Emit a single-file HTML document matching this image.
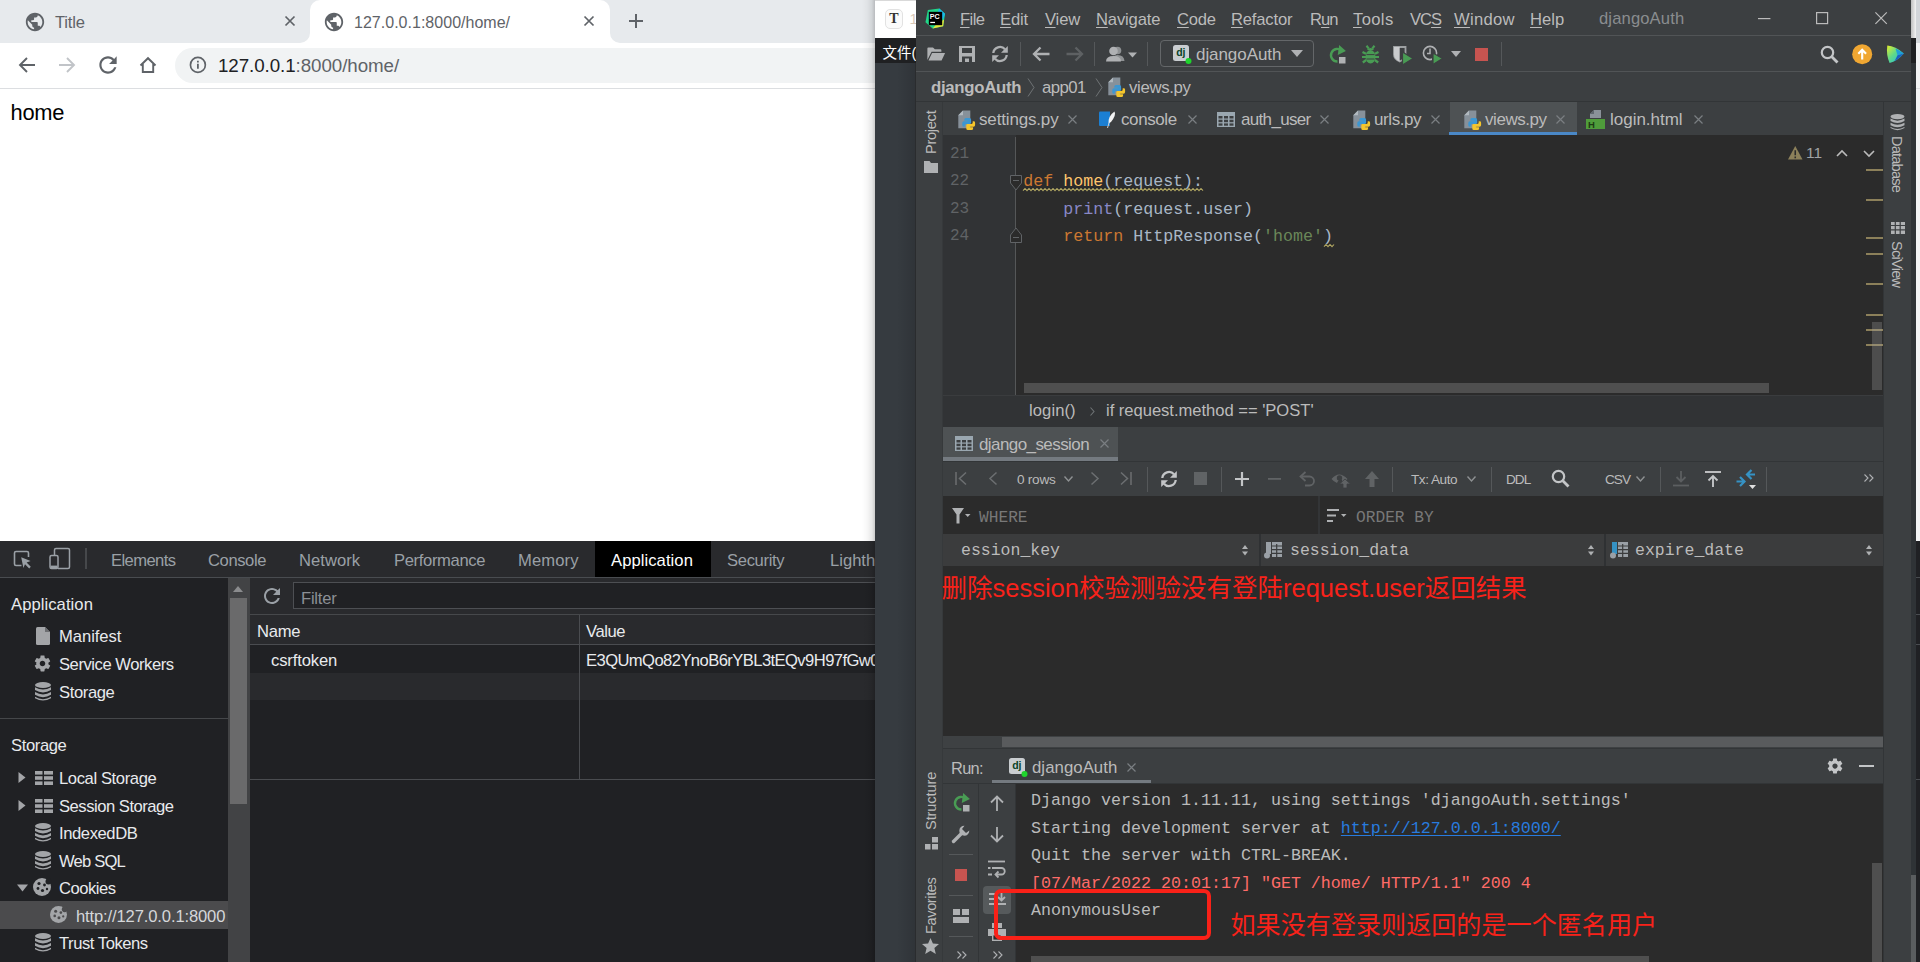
<!DOCTYPE html>
<html lang="zh">
<head>
<meta charset="utf-8">
<title>127.0.0.1:8000/home/</title>
<style>
html,body{margin:0;padding:0;}
body{width:1920px;height:962px;overflow:hidden;position:relative;background:#fff;font-family:"Liberation Sans","Noto Sans CJK SC",sans-serif;}
.a{position:absolute;}
.t{position:absolute;white-space:nowrap;line-height:20px;height:20px;}
svg{position:absolute;overflow:visible;}
/* ---------- chrome ---------- */
#chrome{left:0;top:0;width:875px;height:541px;background:#fff;overflow:hidden;}
#tabstrip{left:0;top:0;width:875px;height:43px;background:#e7eaed;}
#tab2{left:310px;top:0;width:300px;height:43px;background:#fff;border-radius:10px 10px 0 0;}
.tabt{font-size:15.4px;color:#5f6368;top:12.500px;}
#omni{left:175px;top:48px;width:800px;height:35px;border-radius:17.500px;background:#f1f3f4;}
#tbline{left:0;top:88px;width:875px;height:1px;background:#dcdee1;}
/* ---------- devtools ---------- */
#dt{left:0;top:541px;width:875px;height:421px;background:#202124;overflow:hidden;color:#e8eaed;}
#dtbar{left:0;top:0;width:875px;height:36px;background:#292a2d;border-bottom:1px solid #494c50;}
.dtt{font-size:16.6px;color:#9aa0a6;top:10px;}
.sb{font-size:16.6px;color:#e8eaed;margin-top:1px;}
</style>
</head>
<body>
<!-- ================= CHROME ================= -->
<div id="chrome" class="a">
  <div id="tabstrip" class="a"></div>
  <div id="tab2" class="a"></div>
  <!-- tab curve feet -->
  <svg style="left:300px;top:33px" width="10" height="10"><path d="M10 0 V10 H0 A10 10 0 0 0 10 0Z" fill="#fff"/></svg>
  <svg style="left:610px;top:33px" width="10" height="10"><path d="M0 0 V10 H10 A10 10 0 0 1 0 0Z" fill="#fff"/></svg>
  <!-- globe icons -->
  <svg style="left:24px;top:10.500px" width="22" height="22" viewBox="0 0 24 24"><path fill="#5f6368" d="M12 2C6.48 2 2 6.48 2 12s4.48 10 10 10 10-4.48 10-10S17.52 2 12 2zm-1 17.93c-3.95-.49-7-3.85-7-7.93 0-.62.08-1.21.21-1.79L9 15v1c0 1.1.9 2 2 2v1.930zm6.900-2.540c-.26-.81-1-1.390-1.900-1.390h-1v-3c0-.55-.45-1-1-1H8v-2h2c.55 0 1-.45 1-1V7h2c1.100 0 2-.9 2-2v-.41c2.930 1.190 5 4.060 5 7.410 0 2.080-.8 3.970-2.100 5.390z"/></svg>
  <svg style="left:323px;top:10.500px" width="22" height="22" viewBox="0 0 24 24"><path fill="#5f6368" d="M12 2C6.48 2 2 6.48 2 12s4.48 10 10 10 10-4.48 10-10S17.52 2 12 2zm-1 17.93c-3.95-.49-7-3.85-7-7.93 0-.62.08-1.21.21-1.79L9 15v1c0 1.1.9 2 2 2v1.930zm6.900-2.540c-.26-.81-1-1.390-1.900-1.390h-1v-3c0-.55-.45-1-1-1H8v-2h2c.55 0 1-.45 1-1V7h2c1.100 0 2-.9 2-2v-.41c2.930 1.190 5 4.060 5 7.410 0 2.080-.8 3.970-2.100 5.390z"/></svg>
  <div class="t tabt" style="left:55px;font-size:16.600px;letter-spacing:-0.19px">Title</div>
  <div class="t tabt" style="left:354px;font-size:16px;letter-spacing:0.02px">127.0.0.1:8000/home/</div>
  <!-- tab close x -->
  <svg style="left:285px;top:16px" width="10" height="10"><path d="M0.500 0.500 L9.500 9.500 M9.500 0.500 L0.500 9.500" stroke="#5f6368" stroke-width="1.700" fill="none"/></svg>
  <svg style="left:584px;top:16px" width="10" height="10"><path d="M0.500 0.500 L9.500 9.500 M9.500 0.500 L0.500 9.500" stroke="#5f6368" stroke-width="1.700" fill="none"/></svg>
  <!-- plus -->
  <svg style="left:629px;top:14px" width="14" height="14"><path d="M7 0 V14 M0 7 H14" stroke="#5f6368" stroke-width="2" fill="none"/></svg>
  <!-- toolbar -->
  <svg style="left:18px;top:56px" width="18" height="18" viewBox="0 0 18 18"><path d="M17 9 H2.500 M9 2 L2 9 L9 16" stroke="#5f6368" stroke-width="1.900" fill="none"/></svg>
  <svg style="left:58px;top:56px" width="18" height="18" viewBox="0 0 18 18"><path d="M1 9 H15.500 M9 2 L16 9 L9 16" stroke="#c1c4c8" stroke-width="1.900" fill="none"/></svg>
  <svg style="left:94.500px;top:51.500px" width="26" height="26" viewBox="0 0 24 24"><path fill="#5f6368" d="M17.650 6.350C16.200 4.900 14.210 4 12 4c-4.420 0-7.990 3.580-7.990 8s3.570 8 7.990 8c3.730 0 6.840-2.550 7.730-6h-2.080c-.82 2.330-3.040 4-5.650 4-3.310 0-6-2.690-6-6s2.690-6 6-6c1.660 0 3.140.69 4.220 1.780L13 11h7V4l-2.350 2.350z"/></svg>
  <svg style="left:138px;top:55px" width="20" height="20" viewBox="0 0 20 20"><path d="M2.500 10.500 L10 3.200 L17.500 10.500 M4.800 9 V17 H15.200 V9" stroke="#5f6368" stroke-width="1.900" fill="none"/></svg>
  <div id="omni" class="a"></div>
  <svg style="left:188.700px;top:56.400px" width="17.800" height="17.800" viewBox="0 0 16 16"><circle cx="8" cy="8" r="6.700" stroke="#5f6368" stroke-width="1.500" fill="none"/><path d="M8 7 V11.500 M8 4.300 V5.900" stroke="#5f6368" stroke-width="1.600"/></svg>
  <div class="t" style="left:218px;top:56px;font-size:18.750px;color:#202124;letter-spacing:-0.07px">127.0.0.1<span style="color:#5f6368">:8000/home/</span></div>
  <div id="tbline" class="a"></div>
  <div class="t" style="left:10.500px;top:103px;font-size:21.900px;color:#000;letter-spacing:-0.24px">home</div>
</div>
<!-- ================= DEVTOOLS ================= -->
<div id="dt" class="a">
  <div id="dtbar" class="a"></div>
  <!-- inspect icon -->
  <svg style="left:13px;top:9px" width="20" height="20" viewBox="0 0 20 20"><path d="M8.500 15.500 H3 Q1.500 15.500 1.500 14 V3 Q1.500 1.500 3 1.500 H14 Q15.500 1.500 15.500 3 V7" stroke="#9aa0a6" stroke-width="1.600" fill="none"/><path d="M8.200 7.200 L17.600 11 L13.600 12.600 L17.800 16.800 L16.200 18.400 L12 14.200 L10.400 18 Z" fill="#9aa0a6"/></svg>
  <!-- device icon -->
  <svg style="left:49px;top:6px" width="22" height="24" viewBox="0 0 22 24"><path d="M5.500 8.500 V3 Q5.500 1.500 7 1.500 H19 Q20.500 1.500 20.500 3 V20 Q20.500 21.500 19 21.500 H9" stroke="#9aa0a6" stroke-width="1.500" fill="none"/><rect x="1" y="8.500" width="8" height="13" rx="1.500" stroke="#9aa0a6" stroke-width="1.500" fill="none"/><rect x="1.500" y="18.600" width="7" height="2.600" fill="#9aa0a6"/></svg>
  <div class="a" style="left:85px;top:7px;width:2px;height:21px;background:#46484b"></div>
  <div class="t dtt" style="left:111px;letter-spacing:-0.60px">Elements</div>
  <div class="t dtt" style="left:208px;letter-spacing:-0.41px">Console</div>
  <div class="t dtt" style="left:299px;letter-spacing:0.05px">Network</div>
  <div class="t dtt" style="left:394px;letter-spacing:-0.35px">Performance</div>
  <div class="t dtt" style="left:518px;letter-spacing:0.13px">Memory</div>
  <div class="a" style="left:595px;top:0;width:116px;height:36px;background:#000"></div>
  <div class="t dtt" style="left:611px;color:#fff;letter-spacing:0.07px">Application</div>
  <div class="t dtt" style="left:727px;letter-spacing:-0.33px">Security</div>
  <div class="t dtt" style="left:830px">Lighthouse</div>

  <!-- sidebar -->
  <div class="a" style="left:0;top:37px;width:228px;height:384px;background:#202124"></div>
  <div class="t sb" style="left:11px;top:53px;letter-spacing:0.07px">Application</div>
  <div class="t sb" style="left:59px;top:85px;letter-spacing:-0.05px">Manifest</div>
  <div class="t sb" style="left:59px;top:113px;letter-spacing:-0.45px">Service Workers</div>
  <div class="t sb" style="left:59px;top:141px;letter-spacing:-0.38px">Storage</div>
  <div class="a" style="left:0;top:177px;width:228px;height:1px;background:#45474a"></div>
  <div class="t sb" style="left:11px;top:194px;letter-spacing:-0.38px">Storage</div>
  <div class="t sb" style="left:59px;top:227px;letter-spacing:-0.39px">Local Storage</div>
  <div class="t sb" style="left:59px;top:255px;letter-spacing:-0.48px">Session Storage</div>
  <div class="t sb" style="left:59px;top:282px;letter-spacing:-0.41px">IndexedDB</div>
  <div class="t sb" style="left:59px;top:310px;letter-spacing:-0.81px">Web SQL</div>
  <div class="t sb" style="left:59px;top:337px;letter-spacing:-0.48px">Cookies</div>
  <div class="a" style="left:0;top:360px;width:228px;height:28px;background:#4b4b4d"></div>
  <div class="t sb" style="left:76px;top:365px;color:#d5d7da;letter-spacing:-0.14px">http://127.0.0.1:8000</div>
  <div class="t sb" style="left:59px;top:392px;letter-spacing:-0.45px">Trust Tokens</div>
  <!-- icons: manifest file -->
  <svg style="left:36px;top:86px" width="14" height="18" viewBox="0 0 14 18"><path d="M1.500 0 H9 L14 5 V16.500 Q14 18 12.500 18 H1.500 Q0 18 0 16.500 V1.500 Q0 0 1.500 0Z" fill="#a3a5a8"/><path d="M9 0 V5 H14Z" fill="#6d6f72"/></svg>
  <!-- gear -->
  <svg style="left:33px;top:113px" width="19" height="19" viewBox="0 0 24 24"><path fill="#a3a5a8" d="M19.430 12.980c.04-.32.070-.64.070-.98s-.03-.66-.07-.98l2.110-1.650c.19-.15.240-.42.120-.64l-2-3.460c-.12-.22-.39-.3-.61-.22l-2.490 1c-.52-.4-1.080-.73-1.690-.98l-.38-2.650C14.460 2.180 14.250 2 14 2h-4c-.25 0-.46.180-.49.420l-.38 2.650c-.61.250-1.170.59-1.690.98l-2.490-1c-.23-.09-.49 0-.61.220l-2 3.460c-.13.220-.07.490.12.640l2.110 1.650c-.4.320-.7.650-.7.980s.3.660.7.980l-2.110 1.650c-.19.150-.24.420-.12.640l2 3.460c.12.220.39.300.61.220l2.490-1c.52.400 1.080.73 1.690.98l.38 2.650c.3.240.24.420.49.420h4c.25 0 .46-.18.490-.42l.38-2.650c.61-.25 1.170-.59 1.690-.98l2.490 1c.23.090.49 0 .61-.22l2-3.460c.12-.22.070-.49-.12-.64l-2.110-1.650zM12 15.500c-1.930 0-3.500-1.570-3.500-3.500s1.570-3.500 3.500-3.500 3.500 1.570 3.500 3.500-1.570 3.500-3.500 3.500z"/></svg>
  <!-- db icon template -->
  <svg width="0" height="0"><defs>
    <g id="dbi"><ellipse cx="8" cy="3" rx="8" ry="3" fill="#a3a5a8"/><path d="M0 5.200 Q8 10 16 5.200 V8 Q8 12.800 0 8Z M0 10 Q8 14.800 16 10 V12.800 Q8 17.600 0 12.800Z M0 14.800 Q8 19.600 16 14.800 V16.200 Q8 21 0 16.200Z" fill="#a3a5a8"/></g>
    <g id="gridi"><rect x="0" y="0" width="7.500" height="3.600" fill="#a3a5a8"/><rect x="9" y="0" width="9" height="3.600" fill="#a3a5a8"/><rect x="0" y="5.200" width="7.500" height="3.600" fill="#a3a5a8"/><rect x="9" y="5.200" width="9" height="3.600" fill="#a3a5a8"/><rect x="0" y="10.400" width="7.500" height="3.600" fill="#a3a5a8"/><rect x="9" y="10.400" width="9" height="3.600" fill="#a3a5a8"/></g>
    <g id="cookie"><circle cx="9" cy="9" r="9" fill="#a3a5a8"/><circle cx="6" cy="5.500" r="1.600" fill="#202124"/><circle cx="11.500" cy="7" r="1.400" fill="#202124"/><circle cx="5" cy="10.500" r="1.400" fill="#202124"/><circle cx="9.500" cy="12.500" r="1.600" fill="#202124"/><circle cx="14" cy="11" r="1.200" fill="#202124"/><circle cx="15.500" cy="3.500" r="3" fill="#202124"/></g>
  </defs></svg>
  <svg style="left:35px;top:141px" width="16" height="19" viewBox="0 0 16 19"><use href="#dbi"/></svg>
  <svg style="left:35px;top:282px" width="16" height="19" viewBox="0 0 16 19"><use href="#dbi"/></svg>
  <svg style="left:35px;top:310px" width="16" height="19" viewBox="0 0 16 19"><use href="#dbi"/></svg>
  <svg style="left:35px;top:392px" width="16" height="19" viewBox="0 0 16 19"><use href="#dbi"/></svg>
  <svg style="left:35px;top:230px" width="18" height="14" viewBox="0 0 18 14"><use href="#gridi"/></svg>
  <svg style="left:35px;top:258px" width="18" height="14" viewBox="0 0 18 14"><use href="#gridi"/></svg>
  <svg style="left:33px;top:337px" width="18" height="18" viewBox="0 0 18 18"><use href="#cookie"/></svg>
  <svg style="left:50px;top:365px" width="17" height="17" viewBox="0 0 18 18"><circle cx="9" cy="9" r="9" fill="#a3a5a8"/><circle cx="6" cy="5.500" r="1.600" fill="#4b4b4d"/><circle cx="11.500" cy="7" r="1.400" fill="#4b4b4d"/><circle cx="5" cy="10.500" r="1.400" fill="#4b4b4d"/><circle cx="9.500" cy="12.500" r="1.600" fill="#4b4b4d"/><circle cx="14" cy="11" r="1.200" fill="#4b4b4d"/><circle cx="15.500" cy="3.500" r="3" fill="#4b4b4d"/></svg>
  <!-- tree arrows -->
  <svg style="left:18px;top:231px" width="8" height="11"><path d="M0.500 0 L7.500 5.500 L0.500 11Z" fill="#a3a5a8"/></svg>
  <svg style="left:18px;top:259px" width="8" height="11"><path d="M0.500 0 L7.500 5.500 L0.500 11Z" fill="#a3a5a8"/></svg>
  <svg style="left:17px;top:343px" width="11" height="8"><path d="M0 0.500 L11 0.500 L5.500 7.500Z" fill="#a3a5a8"/></svg>
  <!-- sidebar scrollbar -->
  <div class="a" style="left:228px;top:37px;width:22px;height:384px;background:#424345"></div>
  <div class="a" style="left:230px;top:57px;width:17px;height:206px;background:#6a6a6b"></div>
  <svg style="left:233px;top:45px" width="10" height="6"><path d="M0 6 L5 0 L10 6Z" fill="#8b8c8e"/></svg>

  <!-- main panel -->
  <div class="a" style="left:250px;top:37px;width:625px;height:37px;background:#292a2d"></div>
  <svg style="left:260px;top:42.500px" width="24" height="24" viewBox="0 0 24 24"><path fill="#9aa0a6" d="M17.650 6.350C16.200 4.900 14.210 4 12 4c-4.420 0-7.990 3.580-7.990 8s3.570 8 7.990 8c3.730 0 6.840-2.550 7.730-6h-2.080c-.82 2.330-3.040 4-5.650 4-3.310 0-6-2.690-6-6s2.690-6 6-6c1.660 0 3.140.69 4.220 1.780L13 11h7V4l-2.350 2.350z"/></svg>
  <div class="a" style="left:293px;top:41px;width:600px;height:27px;border:1.500px solid #4d4f53;background:#202124;box-sizing:border-box"></div>
  <div class="t" style="left:301px;top:48px;font-size:16.600px;color:#8c9096;letter-spacing:-0.23px">Filter</div>
  <div class="a" style="left:250px;top:73px;width:625px;height:1px;background:#46484b"></div>
  <div class="a" style="left:250px;top:74px;width:625px;height:29px;background:#292a2d"></div>
  <div class="a" style="left:250px;top:103px;width:625px;height:1px;background:#4a4c50"></div>
  <div class="t sb" style="left:257px;top:80px;letter-spacing:-0.29px">Name</div>
  <div class="t sb" style="left:586px;top:80px;letter-spacing:-0.44px">Value</div>
  <div class="t sb" style="left:271px;top:109px;letter-spacing:-0.13px">csrftoken</div>
  <div class="t sb" style="left:586px;top:109px;letter-spacing:-0.58px">E3QUmQo82YnoB6rYBL3tEQv9H97fGw0</div>
  <div class="a" style="left:250px;top:132px;width:625px;height:27px;background:#292a2d"></div>
  <div class="a" style="left:579px;top:74px;width:1px;height:164px;background:#4a4c50"></div>
  <div class="a" style="left:250px;top:238px;width:625px;height:1px;background:#4a4c50"></div>
</div>
<!-- ================= shadow + TYPORA strip ================= -->
<div class="a" style="left:862px;top:0;width:13px;height:962px;background:linear-gradient(to right,rgba(0,0,0,0),rgba(0,0,0,0.030) 40%,rgba(0,0,0,0.090) 75%,rgba(0,0,0,0.200))"></div>
<div class="a" id="typ" style="left:875px;top:0;width:41px;height:962px;background:#363b40;overflow:hidden">
  <div class="a" style="left:22px;top:62px;width:19px;height:900px;background:linear-gradient(to right,rgba(0,0,0,0),rgba(0,0,0,0.130))"></div>
  <div class="a" style="left:40px;top:62px;width:1px;height:900px;background:#2a2c2e"></div>
  <div class="a" style="left:0;top:0;width:41px;height:38px;background:#fff"></div>
  <div class="a" style="left:0;top:0;width:41px;height:1px;background:#d9d9d9"></div>
  <div class="a" style="left:9.600px;top:9px;width:18.500px;height:19.500px;border:1px solid #e2e2e2;border-radius:5px;background:#fbfbfb;box-sizing:border-box"></div>
  <div class="t" style="left:14.200px;top:8.500px;font-family:'Liberation Serif',serif;font-size:14px;color:#333;font-weight:bold">T</div>
  <div class="t" style="left:34.500px;top:9px;font-size:15px;color:#d8c8b8">1</div>
  <div class="a" style="left:0;top:38px;width:41px;height:24.600px;background:#1f2022"></div>
  <div class="t" style="left:7.500px;top:42.500px;font-size:14.500px;color:#fff;font-family:'Liberation Sans','Noto Sans CJK SC',sans-serif">文件(F)</div>
</div>
<!-- ================= PYCHARM ================= -->
<style>
#pc{left:916px;top:0;width:995px;height:962px;background:#3c3f41;overflow:hidden;color:#bbbbbb;}
.m{font-size:16.600px;color:#bbbbbb;top:10px;}
.m u{text-decoration-thickness:1px;text-underline-offset:2px;}
.ui{font-size:16.400px;color:#bbbbbb;}
.code{font-family:"Liberation Mono",monospace;font-size:16.670px;color:#a9b7c6;line-height:27px;height:27px;}
.ln{font-family:"Liberation Mono",monospace;font-size:16px;color:#606366;line-height:27px;height:27px;}
.con{font-family:"Liberation Mono",monospace;font-size:16.670px;color:#bbbbbb;line-height:27px;height:27px;}
.vt{position:absolute;white-space:nowrap;font-size:14.600px;color:#bbbbbb;line-height:16px;height:16px;transform-origin:0 0;}
.cn{font-family:"Liberation Sans","Noto Sans CJK SC",sans-serif;color:#f8221a;font-size:25.500px;line-height:32px;height:32px;}
</style>
<svg width="0" height="0"><defs>
  <g id="pyf"><path d="M5 0.500 H12.300 V18.300 H0.300 V5.200Z" fill="#87919a"/><path d="M5 0.500 V5.200 H0.300Z" fill="#b1b9bf"/><g transform="translate(4.700 8)"><path d="M3.200 0 h3.600 q1.600 0 1.600 1.600 v2.900 q0 1.400 -1.400 1.400 h-3.400 q-1.600 0 -1.600 1.600 v1.200 h-1 q-1.400 0 -1.400 -1.400 v-2.400 q0 -1.600 1.600 -1.600 h3.700 v-0.600 h-3.300 v-1.100 q0 -1.600 1.600 -1.600 z" fill="#3b97d3"/><path d="M3.200 0 h3.600 q1.600 0 1.600 1.600 v2.900 q0 1.400 -1.400 1.400 h-3.400 q-1.600 0 -1.600 1.600 v1.200 h-1 q-1.400 0 -1.400 -1.400 v-2.400 q0 -1.600 1.600 -1.600 h3.700 v-0.600 h-3.300 v-1.100 q0 -1.600 1.600 -1.600 z" fill="#f5c62c" transform="rotate(180 6 6)"/></g></g>
  <g id="tbl"><rect x="0" y="0" width="18" height="15" fill="#9aa7b0"/><rect x="1.500" y="4" width="4" height="2.500" fill="#3c3f41"/><rect x="7" y="4" width="4" height="2.500" fill="#3c3f41"/><rect x="12.500" y="4" width="4" height="2.500" fill="#3c3f41"/><rect x="1.500" y="7.700" width="4" height="2.500" fill="#3c3f41"/><rect x="7" y="7.700" width="4" height="2.500" fill="#3c3f41"/><rect x="12.500" y="7.700" width="4" height="2.500" fill="#3c3f41"/><rect x="1.500" y="11.400" width="4" height="2.300" fill="#3c3f41"/><rect x="7" y="11.400" width="4" height="2.300" fill="#3c3f41"/><rect x="12.500" y="11.400" width="4" height="2.300" fill="#3c3f41"/></g>
  <g id="xx"><path d="M0.500 0.500 L8.500 8.500 M8.500 0.500 L0.500 8.500" stroke="#7a7e82" stroke-width="1.200" fill="none"/></g>
  <g id="dj"><rect x="0" y="0" width="16" height="16" rx="2.500" fill="#c9cdd0"/><text x="3.200" y="11.300" font-family="Liberation Sans,sans-serif" font-weight="bold" font-size="10.500" fill="#0a4428">dj</text><circle cx="15.500" cy="16" r="3" fill="#1fd42d"/></g>
</defs></svg>
<div id="pc" class="a">
  <!-- title/menu -->
  <svg style="left:9px;top:7.500px" width="21" height="21" viewBox="0 0 22 22"><path d="M3 2 L15 0.500 L21 6 L19 19 L8 21.500 L0.500 15Z" fill="#21d789"/><path d="M15 0.500 L21 6 L19 12 L13 5Z" fill="#19b8ea"/><path d="M8 21.500 L19 19 L20 12 L12 17Z" fill="#e4e83c"/><rect x="4" y="4" width="14" height="14" fill="#000"/><text x="5" y="11" font-family="Liberation Sans,sans-serif" font-weight="bold" font-size="7.500" fill="#fff">PC</text><rect x="5.500" y="14.500" width="5" height="1.300" fill="#fff"/></svg>
  <div class="t m" style="left:44px;letter-spacing:-0.59px"><u>F</u>ile</div>
  <div class="t m" style="left:84px;letter-spacing:-0.15px"><u>E</u>dit</div>
  <div class="t m" style="left:129px;letter-spacing:-0.17px"><u>V</u>iew</div>
  <div class="t m" style="left:180px;letter-spacing:-0.16px"><u>N</u>avigate</div>
  <div class="t m" style="left:261px;letter-spacing:-0.22px"><u>C</u>ode</div>
  <div class="t m" style="left:315px;letter-spacing:-0.18px"><u>R</u>efactor</div>
  <div class="t m" style="left:394px;letter-spacing:-0.95px">R<u>u</u>n</div>
  <div class="t m" style="left:437px;letter-spacing:0.37px"><u>T</u>ools</div>
  <div class="t m" style="left:494px;letter-spacing:-1.00px">VC<u>S</u></div>
  <div class="t m" style="left:538px;letter-spacing:0.28px"><u>W</u>indow</div>
  <div class="t m" style="left:614px;letter-spacing:0.01px"><u>H</u>elp</div>
  <div class="t m" style="left:683px;top:9px;color:#8a8d8f;letter-spacing:0.13px">djangoAuth</div>
  <svg style="left:841.800px;top:18px" width="12.400" height="2"><rect width="12.400" height="1.200" fill="#bbbbbb"/></svg>
  <svg style="left:900px;top:12px" width="12.200" height="12.200"><rect x="0.600" y="0.600" width="11" height="11" stroke="#bbbbbb" stroke-width="1.200" fill="none"/></svg>
  <svg style="left:958.800px;top:12px" width="12.200" height="12.200"><path d="M0.400 0.400 L11.800 11.800 M11.800 0.400 L0.400 11.800" stroke="#bbbbbb" stroke-width="1.200" fill="none"/></svg>
  <div class="a" style="left:0;top:35px;width:996px;height:1px;background:#515456"></div>
  <div class="a" style="left:0;top:71px;width:996px;height:1px;background:#515456"></div>
  <!-- toolbar icons -->
  <svg style="left:11px;top:47px" width="18.500" height="14" viewBox="0 0 19 15"><path d="M0 14 V1.500 Q0 0.500 1 0.500 H6 L8 2.500 H14 Q15 2.500 15 3.500 V5 H4.500 Z" fill="#afb1b3"/><path d="M1.200 14.500 L5 6.300 H19 L15.200 14.500Z" fill="#afb1b3"/></svg>
  <svg style="left:43px;top:46px" width="16" height="16" viewBox="0 0 16 16"><path d="M0 0 H16 V16 H0Z M3 2 V7 H13 V2Z M3 10.500 V16 H13 V10.500Z" fill="#afb1b3" fill-rule="evenodd"/><rect x="6" y="12.500" width="4" height="3.500" fill="#afb1b3"/></svg>
  <svg style="left:75px;top:45px" width="18" height="18" viewBox="0 0 18 18"><path d="M2.300 8 A6.700 6.700 0 0 1 14 4.300" stroke="#afb1b3" stroke-width="2.300" fill="none"/><path d="M16.800 1 V7.800 H10Z" fill="#afb1b3"/><path d="M15.700 10 A6.700 6.700 0 0 1 4 13.700" stroke="#afb1b3" stroke-width="2.300" fill="none"/><path d="M1.200 17 V10.200 H8Z" fill="#afb1b3"/></svg>
  <div class="a" style="left:104px;top:42px;width:1px;height:24px;background:#55585a"></div>
  <svg style="left:116px;top:46px" width="18" height="16" viewBox="0 0 18 16"><path d="M17.500 8 H3 M8.500 1.500 L2 8 L8.500 14.500" stroke="#afb1b3" stroke-width="2.300" fill="none"/></svg>
  <svg style="left:150px;top:46px" width="18" height="16" viewBox="0 0 18 16"><path d="M0.500 8 H15 M9.500 1.500 L16 8 L9.500 14.500" stroke="#5e6163" stroke-width="2.300" fill="none"/></svg>
  <div class="a" style="left:178px;top:42px;width:1px;height:24px;background:#55585a"></div>
  <svg style="left:190px;top:46px" width="32" height="16" viewBox="0 0 32 16"><circle cx="11.500" cy="4.500" r="3.800" fill="#8f9294"/><path d="M6 15 Q6 9 11.500 9 Q18 9 18.500 15Z" fill="#8f9294"/><circle cx="7.500" cy="5" r="4.300" fill="#afb1b3"/><path d="M0 15.500 Q0 10 7.500 10 Q15 10 15 15.500Z" fill="#afb1b3"/><path d="M22 6.500 H31 L26.500 11.500Z" fill="#afb1b3"/></svg>
  <div class="a" style="left:231px;top:42px;width:1px;height:24px;background:#55585a"></div>
  <div class="a" style="left:244px;top:40px;width:154px;height:27px;border:1px solid #646769;border-radius:4px;box-sizing:border-box"></div>
  <svg style="left:257px;top:45px" width="19" height="19" viewBox="0 0 19 19"><use href="#dj"/></svg>
  <div class="t ui" style="left:280px;top:45px;font-size:17px;letter-spacing:-0.07px">djangoAuth</div>
  <svg style="left:375px;top:50px" width="12" height="7"><path d="M0 0 H12 L6 7Z" fill="#afb1b3"/></svg>
  <!-- rerun -->
  <svg style="left:412px;top:45px" width="19" height="19" viewBox="0 0 19 19"><path d="M9.500 16.500 A6.300 6.300 0 1 1 14 6" stroke="#499c54" stroke-width="2.400" fill="none"/><path d="M10.500 0.500 L18 5.500 L10.500 10.500Z" fill="#499c54" transform="rotate(8 14 5)"/><rect x="11" y="12" width="6.500" height="6.500" fill="#afb1b3"/></svg>
  <!-- bug -->
  <svg style="left:446px;top:45px" width="17" height="19" viewBox="0 0 17 19"><ellipse cx="8.500" cy="11.800" rx="5" ry="6.700" fill="#499c54"/><path d="M4.800 5 Q8.500 1 12.200 5Z" fill="#499c54"/><path d="M4.500 0.800 L6.800 3.600 M12.500 0.800 L10.200 3.600 M0.500 7 L4 8.800 M16.500 7 L13 8.800 M0 12 H17 M0.800 17.500 L4.200 15 M16.200 17.500 L12.800 15" stroke="#499c54" stroke-width="2.200" fill="none"/><path d="M4.500 9.600 H12.500 M4.500 14 H12.500" stroke="#3c3f41" stroke-width="1"/></svg>
  <!-- coverage -->
  <svg style="left:477px;top:46px" width="20" height="19" viewBox="0 0 20 19"><path d="M1 1 H12.500 V8.500 Q12.500 13 6.700 15.500 Q1 13 1 8.500Z" fill="#3c3f41" stroke="#9da0a2" stroke-width="1.800"/><path d="M1 1 H6.700 V15.500 Q1 13 1 8.500Z" fill="#c9cbcd"/><path d="M9.500 6 L20 12.500 L9.500 19Z" fill="#499c54" stroke="#3c3f41" stroke-width="1.200"/></svg>
  <!-- profile -->
  <svg style="left:506px;top:45px" width="21" height="20" viewBox="0 0 21 20"><circle cx="8" cy="8" r="6.600" stroke="#afb1b3" stroke-width="1.600" fill="none"/><path d="M8 3.500 V8.500 H5" stroke="#afb1b3" stroke-width="1.500" fill="none"/><path d="M10 7 L10 19.500 L11 19.500 L11 7Z" fill="#3c3f41"/><path d="M11 8 L20.500 13.500 L11 19.500Z" fill="#499c54" stroke="#3c3f41" stroke-width="1.200"/></svg>
  <svg style="left:535px;top:51px" width="10" height="6"><path d="M0 0 H10 L5 6Z" fill="#afb1b3"/></svg>
  <div class="a" style="left:559px;top:48px;width:13px;height:13px;background:#c75450"></div>
  <div class="a" style="left:585px;top:42px;width:1px;height:24px;background:#55585a"></div>
  <!-- search -->
  <svg style="left:904px;top:45px" width="19" height="19" viewBox="0 0 19 19"><circle cx="7.500" cy="7.500" r="5.700" stroke="#c3c5c7" stroke-width="2.200" fill="none"/><path d="M11.800 11.800 L17.500 17.500" stroke="#c3c5c7" stroke-width="2.800"/></svg>
  <svg style="left:935.800px;top:43.800px" width="20.400" height="20.400" viewBox="0 0 21 21"><circle cx="10.500" cy="10.500" r="10.300" fill="#f0a732"/><path d="M10.500 16 V6.500 M6.500 10 L10.500 6 L14.500 10" stroke="#fff" stroke-width="2.200" fill="none"/></svg>
  <svg style="left:970px;top:44.500px" width="18.500" height="18.500" viewBox="0 0 18.500 18.500"><defs><linearGradient id="cwg" x1="0" y1="0" x2="1" y2="1"><stop offset="0" stop-color="#e4ee2a"/><stop offset="0.450" stop-color="#5fd98a"/><stop offset="1" stop-color="#18b6e6"/></linearGradient></defs><path d="M1.300 0.600 Q9.500 1 17.800 8.600 Q11 16.500 3.600 18 Q0 10 1.300 0.600Z" fill="url(#cwg)"/><path d="M9.500 3.400 Q14 5.500 17.800 8.600 L11.500 10.200Z" fill="#1e9fd8"/><path d="M17.800 8.600 Q13.500 13.500 8.500 16.300 L11.500 10.200Z" fill="#1a5fc4"/></svg>
  <!-- nav bar -->
  <div class="t ui" style="left:15px;top:78px;font-weight:bold;font-size:16.800px;letter-spacing:-0.31px">djangoAuth</div>
  <svg style="left:111px;top:78px" width="8" height="19"><path d="M1 0.500 L7 9.500 L1 18.500" stroke="#6f7375" stroke-width="1" fill="none"/></svg>
  <div class="t ui" style="left:126px;top:78px;font-size:16.800px;letter-spacing:-0.57px">app01</div>
  <svg style="left:179px;top:78px" width="8" height="19"><path d="M1 0.500 L7 9.500 L1 18.500" stroke="#6f7375" stroke-width="1" fill="none"/></svg>
  <svg style="left:191.500px;top:77px" width="18" height="21" viewBox="0 0 18 21"><use href="#pyf"/></svg>
  <div class="t ui" style="left:213px;top:78px;font-size:16.800px;letter-spacing:-0.34px">views.py</div>
  <div class="a" style="left:0;top:101px;width:996px;height:1px;background:#323537"></div>

  <!-- left tool strip -->
  <div class="a" style="left:0;top:102px;width:26px;height:860px;background:#3c3f41"></div>
  <div class="a" style="left:26px;top:102px;width:1px;height:860px;background:#36393b"></div>
  <div class="vt" style="left:7px;top:154px;transform:rotate(-90deg);letter-spacing:-0.29px">Project</div>
  <svg style="left:8px;top:161px" width="14" height="12" viewBox="0 0 14 12"><path d="M0 0 H5.500 L7 2 H14 V12 H0Z" fill="#afb1b3"/></svg>
  <div class="vt" style="left:7px;top:830px;transform:rotate(-90deg);letter-spacing:-0.1px">Structure</div>
  <svg style="left:9px;top:837px" width="13" height="13" viewBox="0 0 13 13"><rect x="7" y="0" width="6" height="5.500" fill="#afb1b3"/><rect x="0" y="7" width="5.500" height="5.500" fill="#afb1b3"/><rect x="7" y="7" width="6" height="5.500" fill="#afb1b3"/></svg>
  <div class="vt" style="left:7px;top:933.5px;transform:rotate(-90deg);letter-spacing:-0.4px">Favorites</div>
  <svg style="left:6px;top:938px" width="17" height="16" viewBox="0 0 17 16"><path d="M8.500 0 L10.900 5.600 L17 6.100 L12.400 10.100 L13.800 16 L8.500 12.800 L3.200 16 L4.600 10.100 L0 6.100 L6.100 5.600Z" fill="#afb1b3"/></svg>

  <!-- editor tabs -->
  <div class="a" style="left:534px;top:102px;width:127px;height:33px;background:#4e5254"></div>
  <div class="a" style="left:533px;top:132px;width:128px;height:3.700px;background:#4a88c7"></div>
  <svg style="left:42px;top:109.500px" width="18" height="21" viewBox="0 0 18 21"><use href="#pyf"/></svg>
  <div class="t ui" style="left:63px;top:110px;font-size:17px;letter-spacing:-0.16px">settings.py</div>
  <svg style="left:152px;top:115px" width="9" height="9"><use href="#xx"/></svg>
  <svg style="left:182.500px;top:110.500px" width="17" height="20" viewBox="0 0 17 20"><path d="M1 0.500 H11 V15 H1 Q0 15 0 14 V1.500 Q0 0.500 1 0.500Z" fill="#1b7fd3"/><path d="M15.500 0.500 Q17.500 4 12 11 L9.500 12.500 Q9 5 15.500 0.500Z" fill="#f2f2f2"/><path d="M10 12 L8.500 17" stroke="#d0d0d0" stroke-width="1"/></svg>
  <div class="t ui" style="left:205px;top:110px;font-size:17px;letter-spacing:-0.40px">console</div>
  <svg style="left:272px;top:115px" width="9" height="9"><use href="#xx"/></svg>
  <svg style="left:301px;top:112px" width="18" height="15" viewBox="0 0 18 15"><use href="#tbl"/></svg>
  <div class="t ui" style="left:325px;top:110px;font-size:17px;letter-spacing:-0.67px">auth_user</div>
  <svg style="left:404px;top:115px" width="9" height="9"><use href="#xx"/></svg>
  <svg style="left:437px;top:109.500px" width="18" height="21" viewBox="0 0 18 21"><use href="#pyf"/></svg>
  <div class="t ui" style="left:458px;top:110px;font-size:17px;letter-spacing:-0.41px">urls.py</div>
  <svg style="left:515px;top:115px" width="9" height="9"><use href="#xx"/></svg>
  <svg style="left:548px;top:109.500px" width="18" height="21" viewBox="0 0 18 21"><use href="#pyf"/></svg>
  <div class="t ui" style="left:569px;top:110px;font-size:17px;letter-spacing:-0.45px">views.py</div>
  <svg style="left:640px;top:115px" width="9" height="9"><use href="#xx"/></svg>
  <svg style="left:670px;top:110px" width="19" height="19" viewBox="0 0 19 19"><path d="M8 0 H15 V8 H4 V4Z" fill="#8a9299"/><path d="M8 0 V4 H4Z" fill="#5f676e"/><rect x="0" y="9" width="19" height="10" fill="#4f9c3b"/><text x="2" y="17.500" font-family="Liberation Sans,sans-serif" font-weight="bold" font-size="9.500" fill="#1d3b14">H</text></svg>
  <div class="t ui" style="left:694px;top:110px;font-size:17px;letter-spacing:-0.02px">login.html</div>
  <svg style="left:778px;top:115px" width="9" height="9"><use href="#xx"/></svg>

  <!-- editor -->
  <div class="a" style="left:27px;top:135px;width:940px;height:260px;background:#2b2b2b"></div>
  <div class="a" style="left:27px;top:135px;width:73px;height:260px;background:#313335"></div>
  <div class="a" style="left:99px;top:137px;width:1px;height:258px;background:#555758"></div>
  <div class="t ln" style="left:34px;top:141px">21</div>
  <div class="t ln" style="left:34px;top:168px">22</div>
  <div class="t ln" style="left:34px;top:196px">23</div>
  <div class="t ln" style="left:34px;top:223px">24</div>
  <div class="t code" style="left:107.200px;top:168px"><span style="color:#cc7832">def </span><span style="color:#ffc66d">home</span>(request):</div>
  <div class="t code" style="left:147.200px;top:196px"><span style="color:#8888c6">print</span>(request.user)</div>
  <div class="t code" style="left:147.200px;top:223px"><span style="color:#cc7832">return </span>HttpResponse(<span style="color:#6a8759">'home'</span>)</div>
  <!-- wavy underline -->
  <svg style="left:107px;top:188px" width="181" height="4"><path d="M0.0 2.7 L2.0 0.5 L4.0 2.7 L6.0 0.5 L8.0 2.7 L10.0 0.5 L12.0 2.7 L14.0 0.5 L16.0 2.7 L18.0 0.5 L20.0 2.7 L22.0 0.5 L24.0 2.7 L26.0 0.5 L28.0 2.7 L30.0 0.5 L32.0 2.7 L34.0 0.5 L36.0 2.7 L38.0 0.5 L40.0 2.7 L42.0 0.5 L44.0 2.7 L46.0 0.5 L48.0 2.7 L50.0 0.5 L52.0 2.7 L54.0 0.5 L56.0 2.7 L58.0 0.5 L60.0 2.7 L62.0 0.5 L64.0 2.7 L66.0 0.5 L68.0 2.7 L70.0 0.5 L72.0 2.7 L74.0 0.5 L76.0 2.7 L78.0 0.5 L80.0 2.7 L82.0 0.5 L84.0 2.7 L86.0 0.5 L88.0 2.7 L90.0 0.5 L92.0 2.7 L94.0 0.5 L96.0 2.7 L98.0 0.5 L100.0 2.7 L102.0 0.5 L104.0 2.7 L106.0 0.5 L108.0 2.7 L110.0 0.5 L112.0 2.7 L114.0 0.5 L116.0 2.7 L118.0 0.5 L120.0 2.7 L122.0 0.5 L124.0 2.7 L126.0 0.5 L128.0 2.7 L130.0 0.5 L132.0 2.7 L134.0 0.5 L136.0 2.7 L138.0 0.5 L140.0 2.7 L142.0 0.5 L144.0 2.7 L146.0 0.5 L148.0 2.7 L150.0 0.5 L152.0 2.7 L154.0 0.5 L156.0 2.7 L158.0 0.5 L160.0 2.7 L162.0 0.5 L164.0 2.7 L166.0 0.5 L168.0 2.7 L170.0 0.5 L172.0 2.7 L174.0 0.5 L176.0 2.7 L178.0 0.5 L180.0 2.7" stroke="#b0a662" stroke-width="1.100" fill="none"/></svg>
  <svg style="left:407.500px;top:243.500px" width="10" height="4"><path d="M0.0 2.7 L2.0 0.5 L4.0 2.7 L6.0 0.5 L8.0 2.7 L10.0 0.5" stroke="#b0a662" stroke-width="1.100" fill="none"/></svg>
  <!-- fold markers -->
  <svg style="left:94px;top:175px" width="12" height="16"><path d="M0.500 0.500 H11.500 V8 L6 15 L0.500 8Z" fill="#2b2b2b" stroke="#606366" stroke-width="1"/><path d="M3 5.500 H9" stroke="#606366" stroke-width="1"/></svg>
  <svg style="left:94px;top:226.500px" width="12" height="16"><path d="M0.500 15.500 H11.500 V8 L6 1 L0.500 8Z" fill="#2b2b2b" stroke="#606366" stroke-width="1"/><path d="M3 10.500 H9" stroke="#606366" stroke-width="1"/></svg>
  <!-- inspection widget -->
  <svg style="left:871.500px;top:146px" width="14.500" height="13.500" viewBox="0 0 14 13"><path d="M7 0 L14 13 H0Z" fill="#8c805a"/><path d="M7 4 V9 M7 10.200 V11.800" stroke="#2b2b2b" stroke-width="1.500"/></svg>
  <div class="t" style="left:890px;top:143px;font-size:15.500px;color:#a0a3a5">11</div>
  <svg style="left:920px;top:149px" width="12" height="8"><path d="M1 7 L6 2 L11 7" stroke="#bbbbbb" stroke-width="1.600" fill="none"/></svg>
  <svg style="left:947px;top:150px" width="12" height="8"><path d="M1 1 L6 6 L11 1" stroke="#bbbbbb" stroke-width="1.600" fill="none"/></svg>
  <!-- error stripe marks -->
  <div class="a" style="left:950px;top:169px;width:17px;height:2px;background:#8c805a"></div>
  <div class="a" style="left:950px;top:199px;width:17px;height:2px;background:#8c805a"></div>
  <div class="a" style="left:950px;top:237px;width:17px;height:2px;background:#8c805a"></div>
  <div class="a" style="left:950px;top:253px;width:17px;height:2px;background:#8c805a"></div>
  <div class="a" style="left:950px;top:283px;width:17px;height:2px;background:#8c805a"></div>
  <div class="a" style="left:950px;top:314px;width:17px;height:2px;background:#8c805a"></div>
  <div class="a" style="left:950px;top:329px;width:17px;height:2px;background:#8c805a"></div>
  <div class="a" style="left:950px;top:344px;width:17px;height:2px;background:#8c805a"></div>
  <div class="a" style="left:956px;top:322px;width:10px;height:68px;background:rgba(166,166,166,0.280)"></div>
  <!-- h scrollbar -->
  <div class="a" style="left:108px;top:383px;width:745px;height:10px;background:#4f4f4f"></div>
  <!-- breadcrumbs -->
  <div class="a" style="left:27px;top:395px;width:940px;height:32px;background:#313335"></div>
  <div class="a" style="left:27px;top:395px;width:940px;height:1px;background:#3a3c3e"></div>
  <div class="t ui" style="left:113px;top:401px;font-size:16.600px;letter-spacing:0.08px">login()</div>
  <svg style="left:174px;top:407px" width="5" height="9"><path d="M0.500 0.500 L4 4.500 L0.500 8.500" stroke="#6f7375" stroke-width="1.100" fill="none"/></svg>
  <div class="t ui" style="left:190px;top:401px;font-size:16.600px;letter-spacing:-0.03px">if request.method == 'POST'</div>
    
  <!-- right tool strip -->
  <div class="a" style="left:967px;top:102px;width:29px;height:860px;background:#3c3f41"></div>
  <div class="a" style="left:967px;top:102px;width:1px;height:860px;background:#323537"></div>
  <svg style="left:974px;top:114px" width="15" height="17" viewBox="0 0 16 19.500"><ellipse cx="8" cy="3" rx="8" ry="3" fill="#afb1b3"/><path d="M0 5.200 Q8 10 16 5.200 V8 Q8 12.800 0 8Z M0 10 Q8 14.800 16 10 V12.800 Q8 17.600 0 12.800Z M0 14.800 Q8 19.600 16 14.800 V16.200 Q8 21 0 16.200Z" fill="#afb1b3"/></svg>
  <div class="vt" style="left:988.500px;top:136px;transform:rotate(90deg);letter-spacing:-0.81px">Database</div>
  <svg style="left:975px;top:222px" width="14" height="12" viewBox="0 0 14 12"><rect x="0" y="0" width="14" height="12" fill="#afb1b3"/><path d="M0 3.500 H14 M0 7.800 H14 M4.300 0 V12 M9.200 0 V12" stroke="#3c3f41" stroke-width="1.200"/></svg>
  <div class="vt" style="left:988.500px;top:241px;transform:rotate(90deg);letter-spacing:-0.75px">SciView</div>

  <!-- ===== DB panel ===== -->
  <div class="a" style="left:27px;top:427px;width:940px;height:34px;background:#3c3f41"></div>
  <div class="a" style="left:27px;top:427px;width:175px;height:34px;background:#4e5254"></div>
  <div class="a" style="left:27px;top:457px;width:175px;height:4px;background:#747a80"></div>
  <svg style="left:39px;top:436px" width="18" height="15" viewBox="0 0 18 15"><use href="#tbl"/></svg>
  <div class="t ui" style="left:63px;top:434.500px;font-size:17px;letter-spacing:-0.58px">django_session</div>
  <svg style="left:184px;top:439px" width="9" height="9"><use href="#xx"/></svg>
  <div class="a" style="left:27px;top:461px;width:940px;height:1px;background:#323537"></div>
  <!-- db toolbar -->
  <svg style="left:39px;top:472px" width="12" height="13"><path d="M1 0 V13" stroke="#6c6f71" stroke-width="1.500"/><path d="M11 0.500 L4.500 6.500 L11 12.500" stroke="#6c6f71" stroke-width="1.500" fill="none"/></svg>
  <svg style="left:73px;top:472px" width="8" height="13"><path d="M7.500 0.500 L1 6.500 L7.500 12.500" stroke="#6c6f71" stroke-width="1.500" fill="none"/></svg>
  <div class="t" style="left:101px;top:470px;font-size:13.600px;color:#bbbbbb;letter-spacing:-0.26px">0 rows</div>
  <svg style="left:148px;top:476px" width="9" height="6"><path d="M0.500 0.500 L4.500 5 L8.500 0.500" stroke="#8e9193" stroke-width="1.400" fill="none"/></svg>
  <svg style="left:175px;top:472px" width="8" height="13"><path d="M0.500 0.500 L7 6.500 L0.500 12.500" stroke="#6c6f71" stroke-width="1.500" fill="none"/></svg>
  <svg style="left:204px;top:472px" width="12" height="13"><path d="M11 0 V13" stroke="#6c6f71" stroke-width="1.500"/><path d="M1 0.500 L7.500 6.500 L1 12.500" stroke="#6c6f71" stroke-width="1.500" fill="none"/></svg>
  <div class="a" style="left:231px;top:467px;width:1px;height:25px;background:#55585a"></div>
  <svg style="left:244px;top:470px" width="18" height="18" viewBox="0 0 18 18"><path d="M2.300 8 A6.700 6.700 0 0 1 14 4.300" stroke="#c3c5c7" stroke-width="2.300" fill="none"/><path d="M16.800 1 V7.800 H10Z" fill="#c3c5c7"/><path d="M15.700 10 A6.700 6.700 0 0 1 4 13.700" stroke="#c3c5c7" stroke-width="2.300" fill="none"/><path d="M1.200 17 V10.200 H8Z" fill="#c3c5c7"/></svg>
  <div class="a" style="left:278px;top:472px;width:13px;height:13px;background:#606365"></div>
  <div class="a" style="left:305px;top:467px;width:1px;height:25px;background:#55585a"></div>
  <svg style="left:319px;top:472px" width="14" height="14"><path d="M7 0 V14 M0 7 H14" stroke="#c3c5c7" stroke-width="2.200"/></svg>
  <svg style="left:352px;top:478px" width="13" height="2"><rect width="13" height="1.800" fill="#606365"/></svg>
  <svg style="left:383px;top:471px" width="17" height="16" viewBox="0 0 17 16"><path d="M3 5.500 H10.500 A4.500 4.500 0 0 1 10.500 14.500 H6" stroke="#606365" stroke-width="1.800" fill="none"/><path d="M6.500 1 L1.500 5.500 L6.500 10" stroke="#606365" stroke-width="1.800" fill="none"/></svg>
  <svg style="left:415px;top:471px" width="20" height="17" viewBox="0 0 20 17"><path d="M0.500 8 Q8 -1 16.500 8 Q14 11 11 12 V9 Q8 7 6 12 Q2.500 10.500 0.500 8Z" fill="#606365"/><circle cx="8.500" cy="7" r="2.700" fill="#3c3f41"/><path d="M14 8 L19.500 13 H16 V17 H12 V13 H8.500Z" fill="#606365" stroke="#3c3f41" stroke-width="0.800"/></svg>
  <svg style="left:449px;top:471px" width="14" height="16" viewBox="0 0 14 16"><path d="M7 0 L14 8 H9.500 V16 H4.500 V8 H0Z" fill="#606365"/></svg>
  <div class="a" style="left:476px;top:467px;width:1px;height:25px;background:#55585a"></div>
  <div class="t" style="left:495px;top:470px;font-size:13.600px;color:#bbbbbb;letter-spacing:-0.48px">Tx: Auto</div>
  <svg style="left:551px;top:476px" width="9" height="6"><path d="M0.500 0.500 L4.500 5 L8.500 0.500" stroke="#8e9193" stroke-width="1.400" fill="none"/></svg>
  <div class="a" style="left:575px;top:467px;width:1px;height:25px;background:#55585a"></div>
  <div class="t" style="left:590px;top:470px;font-size:13.600px;color:#bbbbbb;letter-spacing:-1.00px">DDL</div>
  <svg style="left:635px;top:469px" width="19" height="19" viewBox="0 0 19 19"><circle cx="7.500" cy="7.500" r="5.700" stroke="#c3c5c7" stroke-width="2.200" fill="none"/><path d="M11.800 11.800 L17.500 17.500" stroke="#c3c5c7" stroke-width="2.800"/></svg>
  <div class="t" style="left:689px;top:470px;font-size:13.600px;color:#bbbbbb;letter-spacing:-1.00px">CSV</div>
  <svg style="left:720px;top:476px" width="9" height="6"><path d="M0.500 0.500 L4.500 5 L8.500 0.500" stroke="#8e9193" stroke-width="1.400" fill="none"/></svg>
  <div class="a" style="left:744px;top:467px;width:1px;height:25px;background:#55585a"></div>
  <svg style="left:757px;top:471px" width="16" height="16" viewBox="0 0 16 16"><path d="M8 0 V10 M3.500 6 L8 10.500 L12.500 6" stroke="#5c5f61" stroke-width="1.800" fill="none"/><path d="M0 14.500 H16" stroke="#5c5f61" stroke-width="1.800"/></svg>
  <svg style="left:789px;top:471px" width="16" height="16" viewBox="0 0 16 16"><path d="M0 1 H16" stroke="#c3c5c7" stroke-width="1.900"/><path d="M8 16 V5.500 M3.500 9.500 L8 5 L12.500 9.500" stroke="#c3c5c7" stroke-width="1.900" fill="none"/></svg>
  <svg style="left:820px;top:469px" width="21" height="21" viewBox="0 0 21 21"><path d="M19 5.500 H11.500 M15.500 1 L11 5.500 L15.500 10" stroke="#3592c4" stroke-width="2.200" fill="none"/><path d="M0.500 12.500 H8 M4 8 L8.500 12.500 L4 17" stroke="#3592c4" stroke-width="2.200" fill="none"/><path d="M13 16 H20 L16.500 20Z" fill="#e0e0e0"/></svg>
  <div class="a" style="left:850px;top:467px;width:1px;height:25px;background:#55585a"></div>
  <svg style="left:948px;top:474px" width="10" height="8"><path d="M0.500 0.500 L4 4 L0.500 7.500 M5.500 0.500 L9 4 L5.500 7.500" stroke="#afb1b3" stroke-width="1.100" fill="none"/></svg>
  <!-- filter row -->
  <div class="a" style="left:27px;top:496px;width:940px;height:38px;background:#2b2b2b"></div>
  <div class="a" style="left:402px;top:496px;width:2px;height:38px;background:#333537"></div>
  <svg style="left:36px;top:508px" width="19" height="16" viewBox="0 0 19 16"><path d="M0 0 H12 L7.500 6.500 V15.500 H4.500 V6.500Z" fill="#afb1b3"/><path d="M13 6 H18.500 L15.700 9Z" fill="#afb1b3"/></svg>
  <div class="t code" style="left:63px;top:505px;color:#787878;font-size:16.200px">WHERE</div>
  <svg style="left:411px;top:509px" width="20" height="14" viewBox="0 0 20 14"><path d="M0 1 H12 M0 6.500 H9 M0 12 H6" stroke="#afb1b3" stroke-width="2"/><path d="M14 5 H19.500 L16.700 8Z" fill="#afb1b3"/></svg>
  <div class="t code" style="left:440px;top:505px;color:#787878;font-size:16.200px">ORDER BY</div>
  <!-- column header -->
  <div class="a" style="left:27px;top:534.400px;width:940px;height:31.600px;background:#3b3c3d"></div>
  <div class="a" style="left:343px;top:534.400px;width:2px;height:31.600px;background:#2f3133"></div>
  <div class="a" style="left:688px;top:534.400px;width:2px;height:31.600px;background:#2f3133"></div>
  <div class="t code" style="left:45px;top:537px;color:#bbbbbb;font-size:16.500px">ession_key</div>
  <div class="t code" style="left:374px;top:537px;color:#bbbbbb;font-size:16.500px">session_data</div>
  <div class="t code" style="left:719px;top:537px;color:#bbbbbb;font-size:16.500px">expire_date</div>
  <svg width="0" height="0"><defs>
    <g id="srt"><path d="M0 4 L3 0 L6 4Z M0 6.500 L3 10.500 L6 6.500Z" fill="#afb1b3"/></g>
    <g id="colg"><rect x="2" y="0" width="5" height="12" fill="#9aa0a6"/><rect x="8" y="0" width="10" height="15" fill="#9aa0a6"/><path d="M8 4 H18 M8 7.700 H18 M8 11.300 H18 M12.700 2 V15" stroke="#3b3c3d" stroke-width="1.200"/><circle cx="3" cy="13.500" r="3" fill="#9aa0a6"/></g>
    <g id="colb"><rect x="2" y="0" width="5" height="12" fill="#3592c4"/><rect x="8" y="0" width="10" height="15" fill="#9aa0a6"/><path d="M8 4 H18 M8 7.700 H18 M8 11.300 H18 M12.700 2 V15" stroke="#3b3c3d" stroke-width="1.200"/><circle cx="3" cy="13.500" r="3" fill="#9aa0a6"/></g>
  </defs></svg>
  <svg style="left:326px;top:545px" width="6" height="11"><use href="#srt"/></svg>
  <svg style="left:672px;top:545px" width="6" height="11"><use href="#srt"/></svg>
  <svg style="left:950px;top:545px" width="6" height="11"><use href="#srt"/></svg>
  <svg style="left:348px;top:542px" width="19" height="17" viewBox="0 0 19 17"><use href="#colg"/></svg>
  <svg style="left:694px;top:542px" width="19" height="17" viewBox="0 0 19 17"><use href="#colb"/></svg>
  <!-- data area -->
  <div class="a" style="left:27px;top:566px;width:940px;height:170px;background:#2b2b2b"></div>
  <div class="t cn" style="left:25.500px;top:571.500px">删除session校验测验没有登陆request.user返回结果</div>
  <!-- h scroll -->
  <div class="a" style="left:27px;top:736px;width:940px;height:12px;background:#3e4143"></div>
  <div class="a" style="left:86px;top:737px;width:881px;height:10px;background:#595b5d"></div>
  <div class="a" style="left:27px;top:748px;width:940px;height:1px;background:#323537"></div>

  <!-- ===== Run panel ===== -->
  <div class="t ui" style="left:35px;top:758px;font-size:16.400px;letter-spacing:-0.71px">Run:</div>
  <svg style="left:93px;top:758px" width="19" height="19" viewBox="0 0 19 19"><use href="#dj"/></svg>
  <div class="t ui" style="left:116px;top:758px;font-size:16.800px;letter-spacing:0.04px">djangoAuth</div>
  <svg style="left:211px;top:763px" width="9" height="9"><use href="#xx"/></svg>
  <div class="a" style="left:76px;top:780px;width:159px;height:3px;background:#747a80"></div>
  <svg style="left:910px;top:757px" width="18" height="18" viewBox="0 0 24 24"><path fill="#c3c5c7" d="M19.430 12.980c.04-.32.070-.64.070-.98s-.03-.66-.07-.98l2.110-1.650c.19-.15.240-.42.120-.64l-2-3.460c-.12-.22-.39-.3-.61-.22l-2.490 1c-.52-.4-1.080-.73-1.690-.98l-.38-2.650C14.460 2.180 14.250 2 14 2h-4c-.25 0-.46.180-.49.420l-.38 2.650c-.61.250-1.170.59-1.690.98l-2.490-1c-.23-.09-.49 0-.61.220l-2 3.460c-.13.220-.07.490.12.640l2.110 1.650c-.4.320-.7.650-.7.980s.3.660.7.980l-2.110 1.650c-.19.150-.24.420-.12.640l2 3.460c.12.220.39.300.61.220l2.490-1c.52.400 1.080.73 1.690.98l.38 2.650c.3.240.24.420.49.420h4c.25 0 .46-.18.490-.42l.38-2.650c.61-.25 1.170-.59 1.690-.98l2.490 1c.23.090.49 0 .61-.22l2-3.460c.12-.22.070-.49-.12-.64l-2.110-1.650zM12 15.500c-1.930 0-3.500-1.570-3.500-3.500s1.570-3.500 3.500-3.500 3.500 1.570 3.500 3.500-1.570 3.500-3.500 3.500z"/></svg>
  <div class="a" style="left:943px;top:765px;width:15px;height:2px;background:#c3c5c7"></div>
  <div class="a" style="left:27px;top:783px;width:940px;height:1px;background:#323537"></div>
  <!-- console bg -->
  <div class="a" style="left:99px;top:784px;width:868px;height:178px;background:#2b2b2b"></div>
  <div class="a" style="left:62px;top:784px;width:1px;height:178px;background:#323537"></div>
  <!-- col1 icons -->
  <svg style="left:36px;top:793px" width="19" height="19" viewBox="0 0 19 19"><path d="M9.500 16.500 A6.300 6.300 0 1 1 14 6" stroke="#499c54" stroke-width="2.400" fill="none"/><path d="M10.500 0.500 L18 5.500 L10.500 10.500Z" fill="#499c54" transform="rotate(8 14 5)"/><rect x="11" y="12" width="6.500" height="6.500" fill="#afb1b3"/></svg>
  <svg style="left:36px;top:825px" width="18" height="18" viewBox="0 0 18 18"><path d="M1.500 16.500 L10 8" stroke="#afb1b3" stroke-width="3.400" stroke-linecap="round"/><path d="M12.500 0.700 A5 5 0 1 0 17.300 5.500 L14 8 L10 4Z" fill="#afb1b3"/></svg>
  <div class="a" style="left:33px;top:854px;width:24px;height:1px;background:#55585a"></div>
  <div class="a" style="left:39px;top:869px;width:12px;height:12px;background:#c75450"></div>
  <div class="a" style="left:33px;top:895px;width:24px;height:1px;background:#55585a"></div>
  <svg style="left:37px;top:909px" width="16" height="14" viewBox="0 0 16 14"><rect x="0" y="0" width="7" height="6" fill="#afb1b3"/><rect x="9" y="0" width="7" height="6" fill="#afb1b3"/><rect x="0" y="8" width="16" height="6" fill="#afb1b3"/></svg>
  <div class="a" style="left:33px;top:936px;width:24px;height:1px;background:#55585a"></div>
  <svg style="left:41px;top:951px" width="10" height="8"><path d="M0.500 0.500 L4 4 L0.500 7.500 M5.500 0.500 L9 4 L5.500 7.500" stroke="#afb1b3" stroke-width="1.100" fill="none"/></svg>
  <!-- col2 icons -->
  <svg style="left:74px;top:795px" width="14" height="16" viewBox="0 0 14 16"><path d="M7 16 V2 M1 7.500 L7 1.500 L13 7.500" stroke="#afb1b3" stroke-width="1.800" fill="none"/></svg>
  <svg style="left:74px;top:827px" width="14" height="16" viewBox="0 0 14 16"><path d="M7 0 V14 M1 8.500 L7 14.500 L13 8.500" stroke="#afb1b3" stroke-width="1.800" fill="none"/></svg>
  <svg style="left:72px;top:860px" width="17" height="17" viewBox="0 0 17 17"><path d="M0 1.500 H17" stroke="#afb1b3" stroke-width="1.800"/><path d="M4 8 H13.500 A3 3 0 0 1 13.500 14.500 H8" stroke="#afb1b3" stroke-width="1.800" fill="none"/><path d="M10.500 11.500 L7.500 14.500 L10.500 17.500" stroke="#afb1b3" stroke-width="1.800" fill="none"/><path d="M0 8 H2.500 M0 14.500 H4" stroke="#afb1b3" stroke-width="1.800"/></svg>
  <div class="a" style="left:67px;top:886px;width:28px;height:28px;background:#565a5c;border-radius:4px"></div>
  <svg style="left:73px;top:892px" width="17" height="17" viewBox="0 0 17 17"><path d="M0 2 H7 M0 7 H7 M0 12 H17" stroke="#afb1b3" stroke-width="1.800"/><path d="M12.500 0 V8 M9 5 L12.500 8.500 L16 5" stroke="#afb1b3" stroke-width="1.800" fill="none"/></svg>
  <svg style="left:72px;top:923px" width="18" height="18" viewBox="0 0 18 18"><rect x="4" y="0" width="10" height="5" fill="#afb1b3"/><rect x="0" y="6" width="18" height="7" fill="#afb1b3"/><rect x="4.700" y="11.700" width="8.600" height="5.600" fill="#2b2b2b" stroke="#afb1b3" stroke-width="1.400"/></svg>
  <svg style="left:77px;top:951px" width="10" height="8"><path d="M0.500 0.500 L4 4 L0.500 7.500 M5.500 0.500 L9 4 L5.500 7.500" stroke="#afb1b3" stroke-width="1.100" fill="none"/></svg>
  <div class="a" style="left:99px;top:784px;width:1px;height:178px;background:#323537"></div>
  <!-- console text -->
  <div class="t con" style="left:115px;top:787px">Django version 1.11.11, using settings 'djangoAuth.settings'</div>
  <div class="t con" style="left:115px;top:815px">Starting development server at <span style="color:#287bde;text-decoration:underline;text-underline-offset:2px">http://127.0.0.1:8000/</span></div>
  <div class="t con" style="left:115px;top:842px">Quit the server with CTRL-BREAK.</div>
  <div class="t con" style="left:115px;top:870px;color:#ff6b68">[07/Mar/2022 20:01:17] "GET /home/ HTTP/1.1" 200 4</div>
  <div class="t con" style="left:115px;top:897px">AnonymousUser</div>
  <!-- red annotation -->
  <div class="a" style="left:77.700px;top:889.300px;width:217.400px;height:50.400px;border:4.800px solid #fa2118;border-radius:7px;box-sizing:border-box"></div>
  <div class="t cn" style="left:314.500px;top:909px;font-size:25.100px">如果没有登录则返回的是一个匿名用户</div>
  <!-- console scrollbars -->
  <div class="a" style="left:956px;top:863px;width:10px;height:99px;background:#4f4f4f"></div>
  <div class="a" style="left:115px;top:956px;width:618px;height:6px;background:#4f4f4f"></div>
</div>
<!-- right edge (windows behind) -->
<div class="a" style="left:1911px;top:0;width:5px;height:962px;background:#2f3336"></div>
<div class="a" style="left:1911px;top:0;width:5px;height:38px;background:linear-gradient(to right,#bfbfbf,#f4f4f4)"></div>
<div class="a" style="left:1911px;top:38px;width:5px;height:24.600px;background:#1f2022"></div>
<div class="a" style="left:1911px;top:875px;width:5px;height:87px;background:#5a5d5f"></div>
<div class="a" style="left:1916px;top:0;width:4px;height:43px;background:#d3d6da"></div>
<div class="a" style="left:1916px;top:43px;width:4px;height:498px;background:#f2f3f4"></div>
<div class="a" style="left:1916px;top:88px;width:4px;height:1px;background:#dcdee1"></div>
<div class="a" style="left:1916px;top:541px;width:4px;height:421px;background:#202124"></div>
<div class="a" style="left:1916px;top:577px;width:4px;height:1px;background:#494c50"></div>
<div class="a" style="left:1916px;top:614px;width:4px;height:1px;background:#494c50"></div>
<div class="a" style="left:1916px;top:644px;width:4px;height:1px;background:#494c50"></div>
<div class="a" style="left:1916px;top:779px;width:4px;height:1px;background:#494c50"></div>

</body>
</html>
